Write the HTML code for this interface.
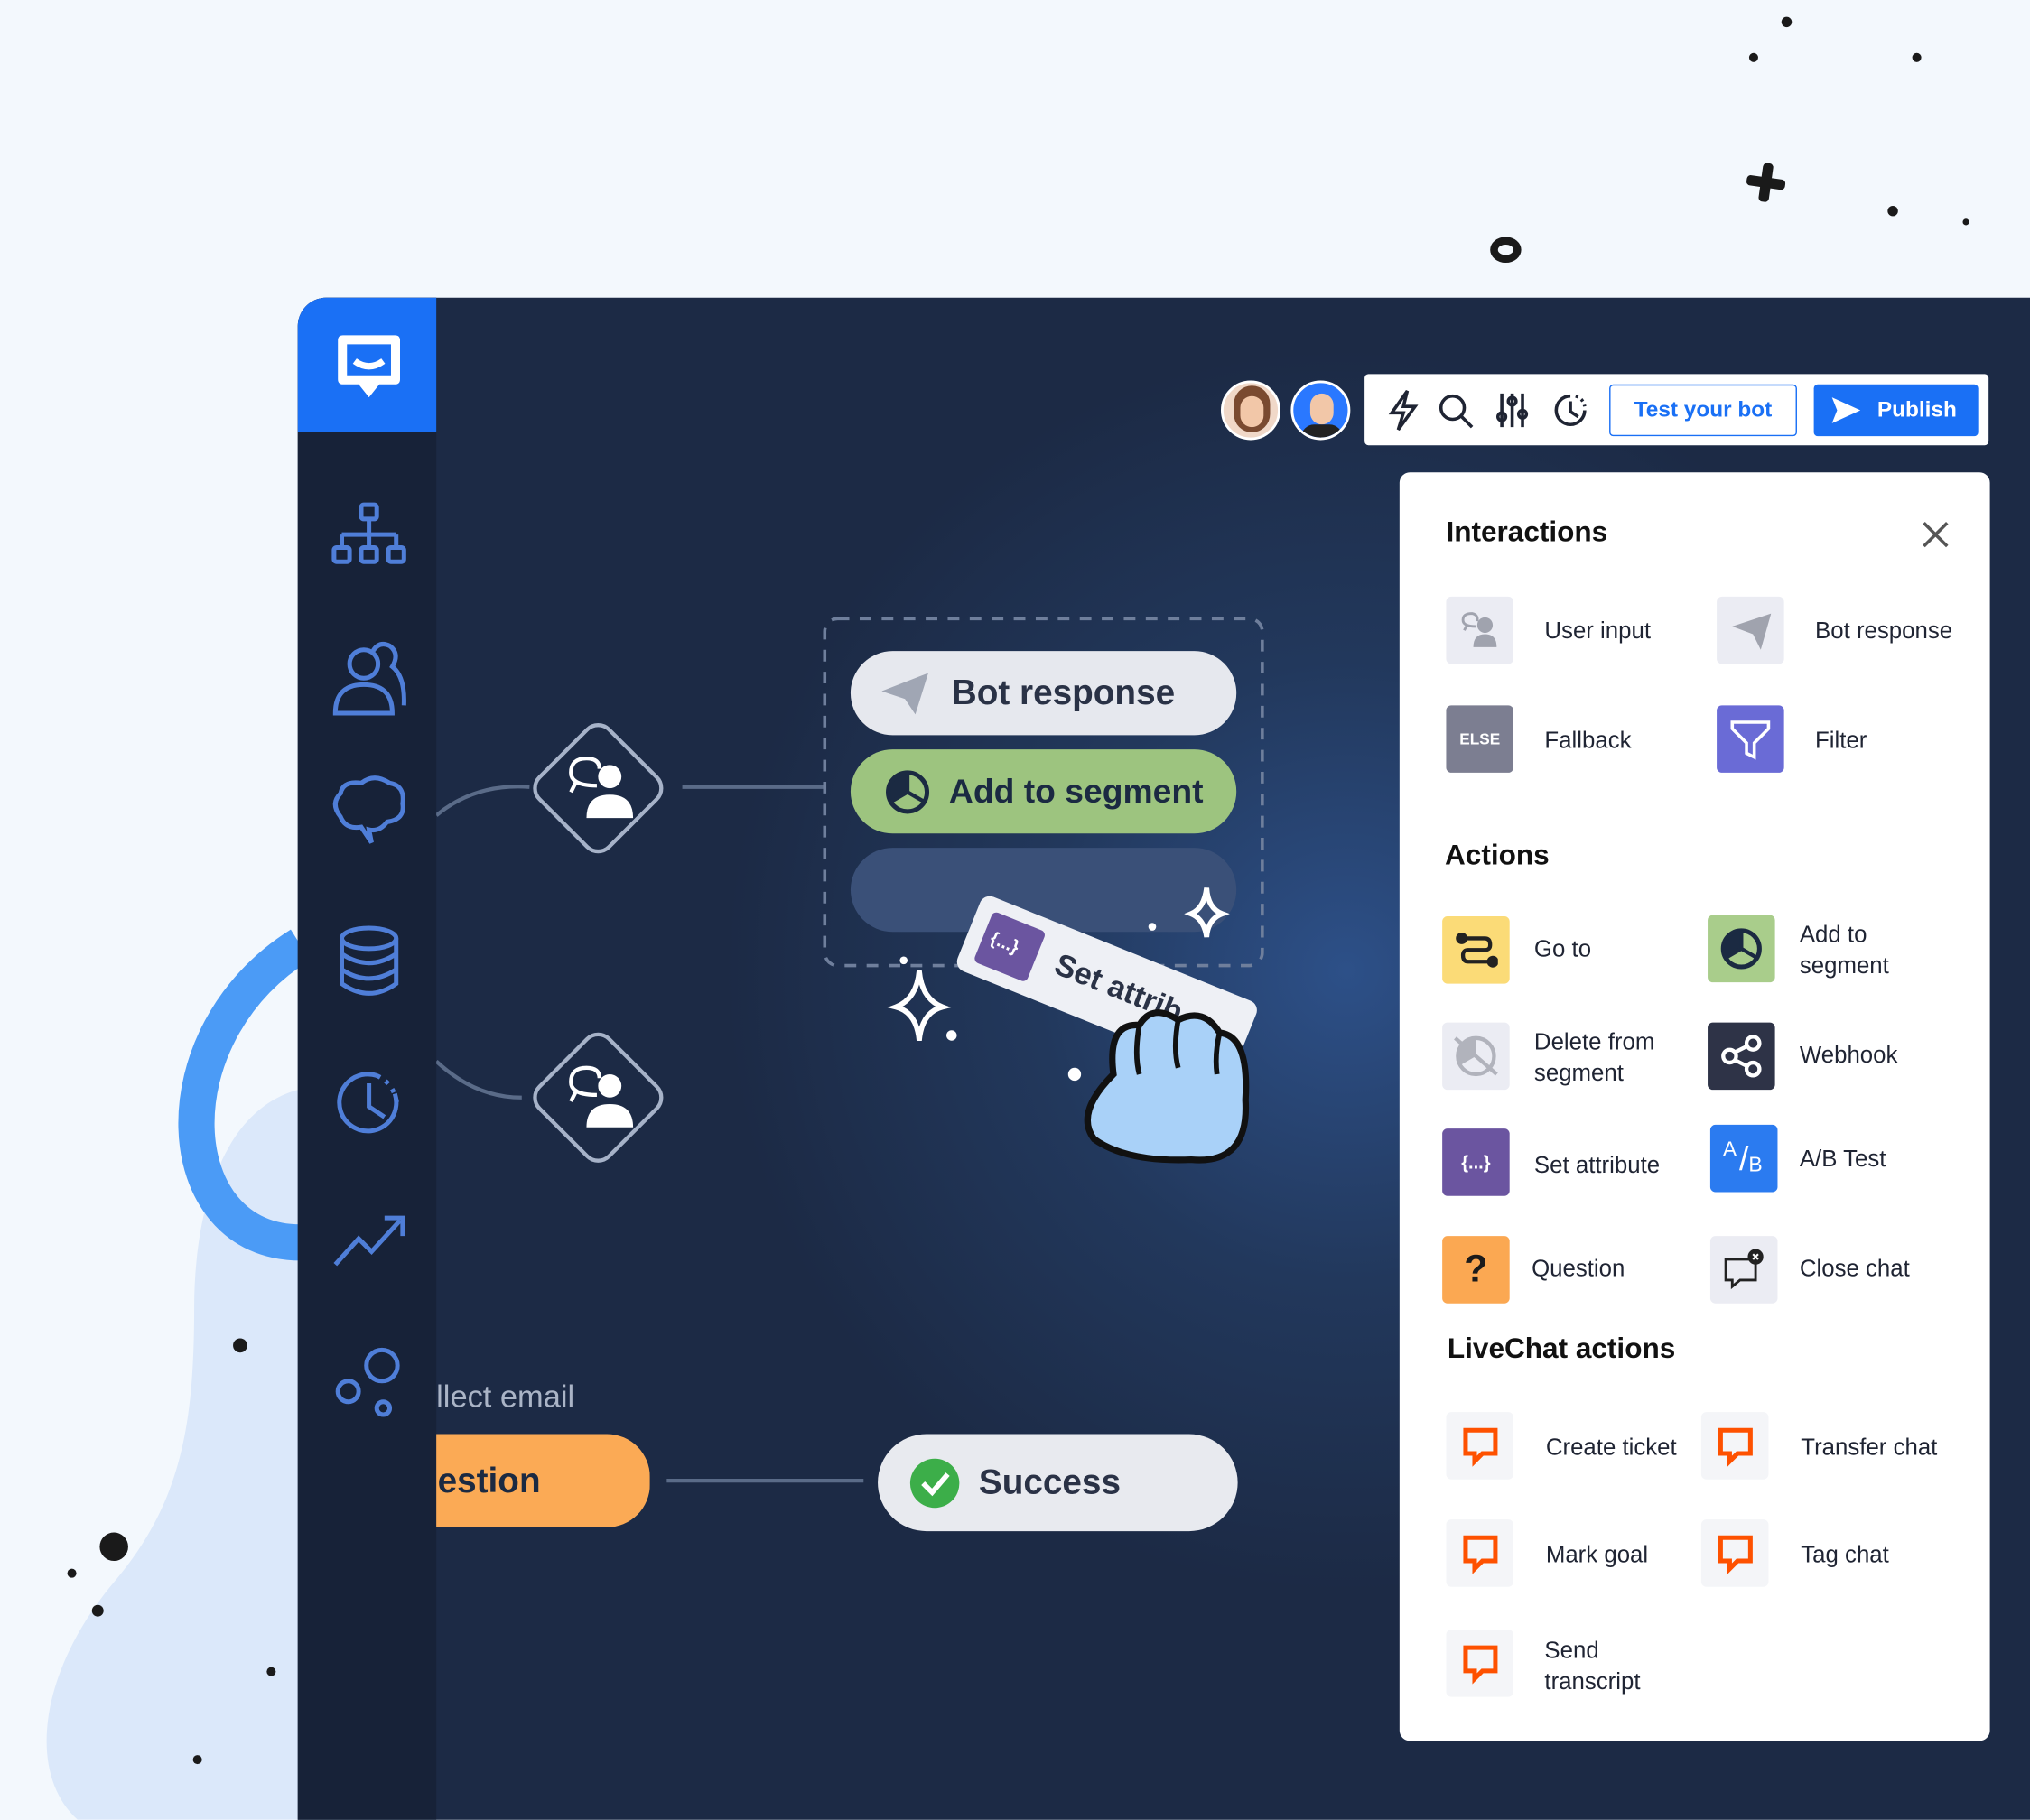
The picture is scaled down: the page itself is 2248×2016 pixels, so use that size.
<!DOCTYPE html>
<html><head><meta charset="utf-8"><style>
*{margin:0;padding:0;box-sizing:border-box}
html,body{width:2248px;height:2016px;overflow:hidden;background:#f3f8fd}
#s{position:absolute;left:0;top:0;width:1568px;height:1406px;transform:scale(1.4337);transform-origin:0 0;font-family:"Liberation Sans",sans-serif;overflow:hidden}
.a{position:absolute}
.ic{position:absolute;width:52px;height:52px;border-radius:4px;display:flex;align-items:center;justify-content:center}
.lb{position:absolute;font-size:18px;color:#1f2433;line-height:24px}
.h{position:absolute;font-size:22px;color:#111;font-weight:600}
.pill{position:absolute;border-radius:33px;font-size:27px;font-weight:600;display:flex;align-items:center}
.dot{position:absolute;border-radius:50%;background:#1a1a1a}
</style></head><body><div id="s">
<svg class="a" style="left:0;top:680px" width="240" height="726"><path d="M240 160 C170 170 150 260 150 330 C150 420 140 480 90 540 C30 610 20 690 60 726 L240 726 Z" fill="#dbe8fa"/><path d="M232 50 C120 120 130 280 232 280" fill="none" stroke="#4b9bf6" stroke-width="28"/></svg>
<div class="dot" style="left:180px;top:1034px;width:11px;height:11px"></div>
<div class="dot" style="left:77px;top:1184px;width:22px;height:22px"></div>
<div class="dot" style="left:52px;top:1212px;width:7px;height:7px"></div>
<div class="dot" style="left:71px;top:1240px;width:9px;height:9px"></div>
<div class="dot" style="left:206px;top:1288px;width:7px;height:7px"></div>
<div class="dot" style="left:149px;top:1356px;width:7px;height:7px"></div>
<div class="dot" style="left:1376px;top:13px;width:8px;height:8px"></div>
<div class="dot" style="left:1351px;top:41px;width:7px;height:7px"></div>
<div class="dot" style="left:1477px;top:41px;width:7px;height:7px"></div>
<div class="dot" style="left:1458px;top:159px;width:8px;height:8px"></div>
<div class="dot" style="left:1516px;top:169px;width:5px;height:5px"></div>
<div class="a" style="left:1151px;top:183px;width:24px;height:20px;border-radius:50%;border:6px solid #1a1a1a"></div>
<div class="a" style="left:1349px;top:137px;width:30px;height:8px;background:#1a1a1a;border-radius:3px;transform:rotate(8deg)"></div>
<div class="a" style="left:1360px;top:126px;width:8px;height:30px;background:#1a1a1a;border-radius:3px;transform:rotate(8deg)"></div>
<div class="a" style="left:230px;top:230px;width:1400px;height:1200px;background:radial-gradient(circle at 810px 520px,#2d5088 0,#22385c 240px,#1c2a45 480px);border-radius:22px 0 0 0"></div>
<div class="a" style="left:230px;top:230px;width:107px;height:1200px;background:#172238;border-radius:22px 0 0 0"></div>
<div class="a" style="left:230px;top:230px;width:107px;height:104px;background:#1a70f5;border-radius:22px 0 0 0"></div>
<svg class="a" style="left:255px;top:255px" width="60" height="60"><path d="M6 8 Q6 4 10 4 H50 Q54 4 54 8 V38 Q54 42 50 42 H38 L30 52 L22 42 H10 Q6 42 6 38 Z" fill="#fff"/><path d="M13 11 H47 V35 H13 Z" fill="#1a70f5"/><path d="M19 24 Q30 32 41 24" stroke="#fff" stroke-width="5" fill="none"/></svg>
<svg class="a" style="left:255px;top:385px" width="60" height="720" fill="none" stroke="#4f7ed8" stroke-width="3.5">
<rect x="24" y="5" width="12" height="11" rx="2"/><path d="M30 16V28M9 28H51M9 28V38M30 28V38M51 28V38"/><rect x="3" y="38" width="12" height="11" rx="2"/><rect x="24" y="38" width="12" height="11" rx="2"/><rect x="45" y="38" width="12" height="11" rx="2"/>
<circle cx="26" cy="128" r="11"/><path d="M4 166 Q4 144 26 144 Q48 144 48 166 Z"/><path d="M33 118 Q38 110 46 114 Q54 120 48 130 Q58 138 57 160"/>
<path d="M8 246 Q0 236 8 228 Q10 218 24 220 Q34 212 46 220 Q58 222 56 236 Q58 248 44 250 Q38 258 30 256 L32 266 L24 254 Q12 256 8 246Z"/>
<ellipse cx="30" cy="340" rx="21" ry="8"/><path d="M9 340V375Q30 390 51 375V340M9 352Q30 366 51 352M9 364Q30 378 51 364"/>
<path d="M30 452V470L42 478M50 460A22 22 0 1 1 36 446"/><path d="M36 446 Q50 452 52 470" stroke-dasharray="3 5"/>
<path d="M4 592 L22 572 L32 582 L54 558 M42 556H56V570"/>
<circle cx="40" cy="670" r="12"/><circle cx="14" cy="690" r="8"/><circle cx="41" cy="703" r="5"/>
</svg>
<svg class="a" style="left:337px;top:470px" width="700" height="720" fill="none">
<path d="M0 160 Q30 135 72 138" stroke="#5a6b88" stroke-width="3"/><path d="M190 138 H300" stroke="#5a6b88" stroke-width="3"/>
<path d="M0 350 Q30 378 66 378" stroke="#5a6b88" stroke-width="3"/>
<path d="M178 674 H330" stroke="#5a6b88" stroke-width="3"/>
<rect x="300" y="8" width="338" height="268" rx="10" stroke="#6f7f9c" stroke-width="2.5" stroke-dasharray="9 8"/>
<rect x="87" y="101" width="76" height="76" rx="12" transform="rotate(45 125 139)" stroke="#a6b2c8" stroke-width="3"/>
<rect x="87" y="340" width="76" height="76" rx="12" transform="rotate(45 125 378)" stroke="#a6b2c8" stroke-width="3"/>
<g fill="#fff"><circle cx="134" cy="130" r="9"/><path d="M116 162Q116 144 134 144Q152 144 152 162Z"/><circle cx="134" cy="369" r="9"/><path d="M116 401Q116 383 134 383Q152 383 152 401Z"/></g>
<path d="M124 137Q104 137 104 127Q104 116 116 116Q126 116 126 124M108 134L104 142" stroke="#fff" stroke-width="3"/>
<path d="M124 376Q104 376 104 366Q104 355 116 355Q126 355 126 363M108 373L104 381" stroke="#fff" stroke-width="3"/>
</svg>
<div class="pill" style="left:657px;top:503px;width:298px;height:65px;background:#e6e8ee;color:#2a3246;padding-left:22px">
<svg width="40" height="36" style="margin-right:16px"><path d="M2 16 L38 2 L28 34 L20 22 Z" fill="#a0a6b4"/></svg>Bot response</div>
<div class="pill" style="left:657px;top:579px;width:298px;height:65px;background:#9dc47f;color:#1b2a42;padding-left:26px;font-size:26px">
<svg width="36" height="36" style="margin-right:14px"><path d="M18 18V3A15 15 0 0 0 5 25.5Z" fill="#1b2a42"/><circle cx="18" cy="18" r="15" fill="none" stroke="#1b2a42" stroke-width="3.5"/><path d="M18 3V18L31 25.5M18 18L5 25.5" stroke="#1b2a42" stroke-width="3" fill="none"/></svg>Add to segment</div>
<div class="pill" style="left:657px;top:655px;width:298px;height:65px;background:#3a5078"></div>
<div class="a" style="left:760px;top:690px;width:230px;height:62px;background:#eef0f5;border-radius:8px;transform:rotate(22deg);transform-origin:0 0;font-size:24px;color:#2a3246;font-weight:600;padding:16px 0 0 72px;white-space:nowrap;overflow:hidden">Set attrib
<div class="a" style="left:12px;top:10px;width:44px;height:42px;background:#6b55a0;border-radius:4px;color:#fff;font-size:14px;padding:11px 0 0 6px">{...}</div></div>
<svg class="a" style="left:680px;top:680px" width="300" height="230">
<path d="M30 70 Q32 92 48 98 Q32 102 30 124 Q28 102 12 98 Q28 92 30 70Z" fill="none" stroke="#fff" stroke-width="4"/>
<path d="M252 6 Q253 22 264 26 Q253 30 252 44 Q250 30 240 26 Q250 22 252 6Z" fill="none" stroke="#fff" stroke-width="4"/>
<circle cx="55" cy="120" r="4" fill="#fff"/><circle cx="150" cy="150" r="5" fill="#fff"/><circle cx="210" cy="36" r="3" fill="#fff"/><circle cx="18" cy="62" r="3" fill="#fff"/>
<path d="M180 150 Q175 110 200 112 Q210 95 230 108 Q250 98 262 118 Q285 120 282 170 Q285 220 240 216 Q190 218 165 200 Q150 180 180 150Z" fill="#a9d1f8" stroke="#111" stroke-width="5"/>
<path d="M200 112 Q196 135 200 150 M230 108 Q226 130 230 145 M262 118 Q258 135 260 150" stroke="#111" stroke-width="4" fill="none"/>
</svg>
<div class="a" style="left:337px;top:1066px;font-size:24px;color:#aab4c6">llect email</div>
<div class="pill" style="left:300px;top:1108px;width:202px;height:72px;background:#fbaa55;color:#1b2a42;padding-left:38px;clip-path:inset(0 0 0 37px)">estion</div>
<div class="pill" style="left:678px;top:1108px;width:278px;height:75px;background:#e8eaef;color:#2a3246;padding-left:24px;border-radius:38px">
<svg width="40" height="40" style="margin-right:14px"><circle cx="20" cy="20" r="19" fill="#3cae49"/><path d="M11 20L18 27L30 13" stroke="#fff" stroke-width="4" fill="none"/></svg>Success</div>
<div class="a" style="left:943px;top:294px;width:46px;height:46px;border-radius:50%;background:#f0d8c8;border:2px solid #fff;overflow:hidden"><div class="a" style="left:8px;top:2px;width:28px;height:36px;border-radius:14px;background:#7a4a30"></div><div class="a" style="left:13px;top:10px;width:18px;height:24px;border-radius:9px;background:#f2c7a8"></div></div>
<div class="a" style="left:997px;top:294px;width:46px;height:46px;border-radius:50%;background:#2a78ff;border:2px solid #fff;overflow:hidden"><div class="a" style="left:13px;top:8px;width:18px;height:24px;border-radius:9px;background:#f2c7a8"></div><div class="a" style="left:6px;top:32px;width:32px;height:20px;border-radius:10px;background:#222"></div></div>
<div class="a" style="left:1054px;top:289px;width:482px;height:55px;background:#fff;border-radius:3px"></div>
<svg class="a" style="left:1065px;top:298px" width="170" height="38" fill="none" stroke="#1f2433" stroke-width="2.5">
<path d="M22 4L10 21H19L15 34L28 16H19Z"/><circle cx="57" cy="17" r="9"/><path d="M64 24L72 32"/>
<path d="M95 6V32M103 6V32M111 6V32"/><circle cx="95" cy="24" r="3"/><circle cx="103" cy="12" r="3"/><circle cx="111" cy="22" r="3"/>
<path d="M148 8A11 11 0 1 0 159 19M148 12V20L154 24"/><path d="M152 8Q158 10 159 16" stroke-dasharray="2 3"/></svg>
<div class="a" style="left:1243px;top:297px;width:145px;height:40px;border:1.5px solid #1a70f5;border-radius:3px;color:#1a70f5;font-size:17px;font-weight:600;text-align:center;line-height:37px">Test your bot</div>
<div class="a" style="left:1401px;top:297px;width:127px;height:40px;background:#1a70f5;border-radius:3px;color:#fff;font-size:17px;font-weight:600;line-height:40px;padding-left:49px">Publish</div>
<svg class="a" style="left:1414px;top:306px" width="24" height="22"><path d="M1 1L23 11L1 21L5 11Z" fill="#fff"/></svg>
<div class="a" style="left:1081px;top:365px;width:456px;height:980px;background:#fff;border-radius:8px"></div>
<div class="h" style="left:1117px;top:398px">Interactions</div>
<svg class="a" style="left:1484px;top:402px" width="22" height="22"><path d="M2 2L20 20M20 2L2 20" stroke="#555" stroke-width="2.5"/></svg>
<div class="ic" style="left:1117px;top:461px;background:#ebecf3"><svg width="30" height="30"><circle cx="19" cy="11" r="6" fill="#a0a3ae"/><path d="M10 28Q10 18 19 18Q28 18 28 28Z" fill="#a0a3ae"/><path d="M12 12Q2 12 2 7Q2 2 9 2Q14 3 13 8M5 11L3 15" stroke="#a0a3ae" stroke-width="2" fill="none"/></svg></div>
<div class="lb" style="left:1193px;top:475px">User input</div>
<div class="ic" style="left:1326px;top:461px;background:#ebecf3"><svg width="32" height="30"><path d="M2 12L32 2L24 30L18 18Z" fill="#a0a3ae"/></svg></div>
<div class="lb" style="left:1402px;top:475px">Bot response</div>
<div class="ic" style="left:1117px;top:545px;background:#7c7e91;color:#fff;font-size:12px;font-weight:700">ELSE</div>
<div class="lb" style="left:1193px;top:560px">Fallback</div>
<div class="ic" style="left:1326px;top:545px;background:#6a6bd6"><svg width="34" height="34"><path d="M3 4H31V9L20 20V31L14 28V20L3 9Z" fill="none" stroke="#fff" stroke-width="2.5"/></svg></div>
<div class="lb" style="left:1402px;top:560px">Filter</div>
<div class="h" style="left:1116px;top:648px">Actions</div>
<div class="ic" style="left:1114px;top:708px;background:#fbdb77"><svg width="34" height="34" fill="none" stroke="#222" stroke-width="3"><circle cx="6" cy="8" r="3" fill="#222"/><circle cx="30" cy="26" r="3" fill="#222"/><path d="M6 8H24Q28 8 28 13Q28 17 24 17H11Q7 17 7 21Q7 26 11 26H30"/></svg></div>
<div class="lb" style="left:1185px;top:721px">Go to</div>
<div class="ic" style="left:1319px;top:707px;background:#a9cd8b"><svg width="34" height="34"><path d="M17 17V3A14 14 0 0 0 5 24Z" fill="#1b2a42"/><circle cx="17" cy="17" r="14" fill="none" stroke="#1b2a42" stroke-width="3.5"/><path d="M17 3V17L29 24M17 17L5 24" stroke="#1b2a42" stroke-width="3" fill="none"/></svg></div>
<div class="lb" style="left:1390px;top:710px">Add to<br>segment</div>
<div class="ic" style="left:1114px;top:790px;background:#ebecf3"><svg width="40" height="40"><circle cx="20" cy="20" r="14" fill="none" stroke="#b1b3bc" stroke-width="3"/><path d="M20 20V6A14 14 0 0 0 8 27Z" fill="#b1b3bc"/><path d="M4 6L36 34" stroke="#b1b3bc" stroke-width="3"/></svg></div>
<div class="lb" style="left:1185px;top:793px">Delete from<br>segment</div>
<div class="ic" style="left:1319px;top:790px;background:#2e3347"><svg width="34" height="34" fill="none" stroke="#fff" stroke-width="3"><circle cx="8" cy="17" r="5"/><circle cx="26" cy="7" r="5"/><circle cx="26" cy="27" r="5"/><path d="M12 14L22 9M12 20L22 25"/></svg></div>
<div class="lb" style="left:1390px;top:803px">Webhook</div>
<div class="ic" style="left:1114px;top:872px;background:#6b55a0;color:#fff;font-size:14px;font-weight:700">{...}</div>
<div class="lb" style="left:1185px;top:888px">Set attribute</div>
<div class="ic" style="left:1321px;top:869px;background:#2b7bf0;color:#fff;font-size:16px"><span style="position:relative;top:-6px;left:-2px">A</span><span style="font-size:26px">/</span><span style="position:relative;top:6px">B</span></div>
<div class="lb" style="left:1390px;top:883px">A/B Test</div>
<div class="ic" style="left:1114px;top:955px;background:#fba852;color:#1b1b1b;font-size:30px;font-weight:700">?</div>
<div class="lb" style="left:1183px;top:968px">Question</div>
<div class="ic" style="left:1321px;top:955px;background:#ebecf3"><svg width="34" height="34" fill="none" stroke="#222" stroke-width="2"><path d="M3 9H26V25H14L8 30V25H3Z"/><circle cx="26" cy="7" r="5" fill="#222"/><path d="M24 5L28 9M28 5L24 9" stroke="#fff" stroke-width="1.5"/></svg></div>
<div class="lb" style="left:1390px;top:968px">Close chat</div>
<div class="h" style="left:1118px;top:1029px">LiveChat actions</div>
<div class="ic" style="left:1117px;top:1091px;background:#f4f5f8"></div><div class="ic" style="left:1314px;top:1091px;background:#f4f5f8"></div>
<div class="ic" style="left:1117px;top:1174px;background:#f4f5f8"></div><div class="ic" style="left:1314px;top:1174px;background:#f4f5f8"></div>
<div class="ic" style="left:1117px;top:1259px;background:#f4f5f8"></div>
<svg class="a" style="left:1117px;top:1091px" width="250" height="220" fill="none" stroke="#fe5100" stroke-width="3.5">
<path id="c" d="M15 14H38V32H28L22 38V32H15Z"/>
<use href="#c" x="197"/><use href="#c" y="83"/><use href="#c" x="197" y="83"/><use href="#c" y="168"/></svg>
<div class="lb" style="left:1194px;top:1106px">Create ticket</div>
<div class="lb" style="left:1391px;top:1106px">Transfer chat</div>
<div class="lb" style="left:1194px;top:1189px">Mark goal</div>
<div class="lb" style="left:1391px;top:1189px">Tag chat</div>
<div class="lb" style="left:1193px;top:1263px">Send<br>transcript</div>
</div></body></html>
